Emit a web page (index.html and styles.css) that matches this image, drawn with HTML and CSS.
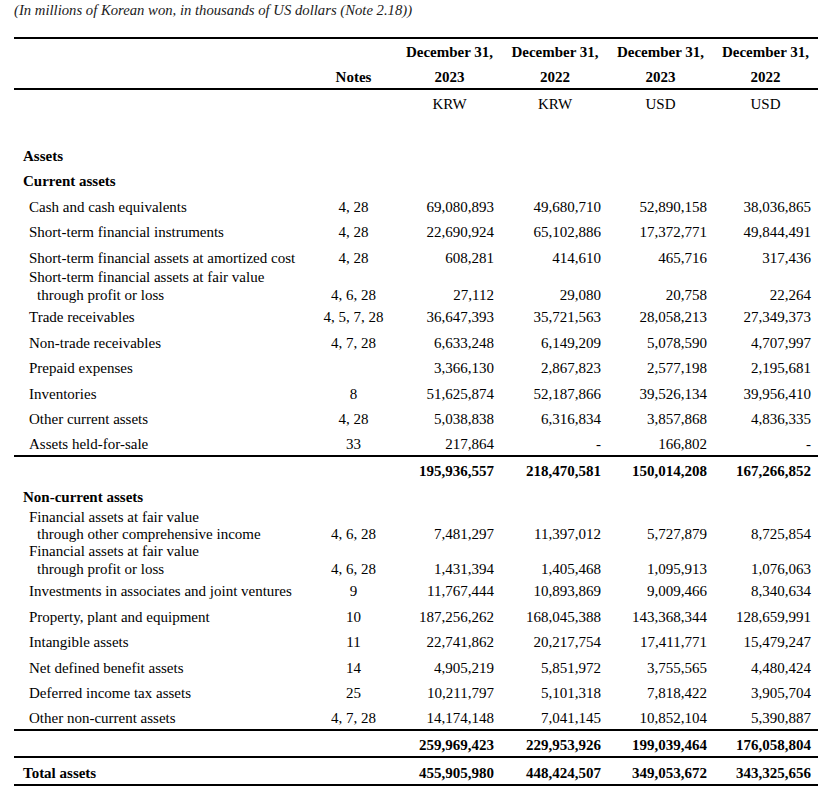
FILE: index.html
```html
<!DOCTYPE html>
<html>
<head>
<meta charset="utf-8">
<link rel="stylesheet" href="styles.css">
</head>
<body>
<div class="sheet">
  <div class="title">(In millions of Korean won, in thousands of US dollars (Note 2.18))</div>
  <div class="rule"></div>
  <div class="row head h1">
    <div></div><div></div>
    <div>December 31,</div><div>December 31,</div><div>December 31,</div><div>December 31,</div>
  </div>
  <div class="row head h2">
    <div></div><div class="notes">Notes</div>
    <div>2023</div><div>2022</div><div>2023</div><div>2022</div>
  </div>
  <div class="rule"></div>
  <div class="row cur">
    <div></div><div></div>
    <div>KRW</div><div>KRW</div><div>USD</div><div>USD</div>
  </div>
  <div class="spacer"></div>

  <div class="row"><div class="lbl l0 b">Assets</div></div>
  <div class="row"><div class="lbl l0 b">Current assets</div></div>
  <div class="row"><div class="lbl l1">Cash and cash equivalents</div><div class="nt">4, 28</div><div class="n">69,080,893</div><div class="n">49,680,710</div><div class="n">52,890,158</div><div class="n">38,036,865</div></div>
  <div class="row"><div class="lbl l1">Short-term financial instruments</div><div class="nt">4, 28</div><div class="n">22,690,924</div><div class="n">65,102,886</div><div class="n">17,372,771</div><div class="n">49,844,491</div></div>
  <div class="row"><div class="lbl l1">Short-term financial assets at amortized cost</div><div class="nt">4, 28</div><div class="n">608,281</div><div class="n">414,610</div><div class="n">465,716</div><div class="n">317,436</div></div>
  <div class="row two"><div class="lbl l1"><span>Short-term financial assets at fair value</span><span class="cont">through profit or loss</span></div><div class="nt">4, 6, 28</div><div class="n">27,112</div><div class="n">29,080</div><div class="n">20,758</div><div class="n">22,264</div></div>
  <div class="row"><div class="lbl l1">Trade receivables</div><div class="nt">4, 5, 7, 28</div><div class="n">36,647,393</div><div class="n">35,721,563</div><div class="n">28,058,213</div><div class="n">27,349,373</div></div>
  <div class="row"><div class="lbl l1">Non-trade receivables</div><div class="nt">4, 7, 28</div><div class="n">6,633,248</div><div class="n">6,149,209</div><div class="n">5,078,590</div><div class="n">4,707,997</div></div>
  <div class="row"><div class="lbl l1">Prepaid expenses</div><div class="nt"></div><div class="n">3,366,130</div><div class="n">2,867,823</div><div class="n">2,577,198</div><div class="n">2,195,681</div></div>
  <div class="row"><div class="lbl l1">Inventories</div><div class="nt">8</div><div class="n">51,625,874</div><div class="n">52,187,866</div><div class="n">39,526,134</div><div class="n">39,956,410</div></div>
  <div class="row"><div class="lbl l1">Other current assets</div><div class="nt">4, 28</div><div class="n">5,038,838</div><div class="n">6,316,834</div><div class="n">3,857,868</div><div class="n">4,836,335</div></div>
  <div class="row last"><div class="lbl l1">Assets held-for-sale</div><div class="nt">33</div><div class="n">217,864</div><div class="n">-</div><div class="n">166,802</div><div class="n">-</div></div>
  <div class="rule"></div>
  <div class="row sub1 b"><div></div><div></div><div class="n">195,936,557</div><div class="n">218,470,581</div><div class="n">150,014,208</div><div class="n">167,266,852</div></div>

  <div class="row"><div class="lbl l0 b">Non-current assets</div></div>
  <div class="row two"><div class="lbl l1"><span>Financial assets at fair value</span><span class="cont">through other comprehensive income</span></div><div class="nt">4, 6, 28</div><div class="n">7,481,297</div><div class="n">11,397,012</div><div class="n">5,727,879</div><div class="n">8,725,854</div></div>
  <div class="row two"><div class="lbl l1"><span>Financial assets at fair value</span><span class="cont">through profit or loss</span></div><div class="nt">4, 6, 28</div><div class="n">1,431,394</div><div class="n">1,405,468</div><div class="n">1,095,913</div><div class="n">1,076,063</div></div>
  <div class="row"><div class="lbl l1">Investments in associates and joint ventures</div><div class="nt">9</div><div class="n">11,767,444</div><div class="n">10,893,869</div><div class="n">9,009,466</div><div class="n">8,340,634</div></div>
  <div class="row"><div class="lbl l1">Property, plant and equipment</div><div class="nt">10</div><div class="n">187,256,262</div><div class="n">168,045,388</div><div class="n">143,368,344</div><div class="n">128,659,991</div></div>
  <div class="row"><div class="lbl l1">Intangible assets</div><div class="nt">11</div><div class="n">22,741,862</div><div class="n">20,217,754</div><div class="n">17,411,771</div><div class="n">15,479,247</div></div>
  <div class="row"><div class="lbl l1">Net defined benefit assets</div><div class="nt">14</div><div class="n">4,905,219</div><div class="n">5,851,972</div><div class="n">3,755,565</div><div class="n">4,480,424</div></div>
  <div class="row"><div class="lbl l1">Deferred income tax assets</div><div class="nt">25</div><div class="n">10,211,797</div><div class="n">5,101,318</div><div class="n">7,818,422</div><div class="n">3,905,704</div></div>
  <div class="row last"><div class="lbl l1">Other non-current assets</div><div class="nt">4, 7, 28</div><div class="n">14,174,148</div><div class="n">7,041,145</div><div class="n">10,852,104</div><div class="n">5,390,887</div></div>
  <div class="rule"></div>
  <div class="row sub2 b"><div></div><div></div><div class="n">259,969,423</div><div class="n">229,953,926</div><div class="n">199,039,464</div><div class="n">176,058,804</div></div>
  <div class="rule"></div>
  <div class="row total b"><div class="lbl l0">Total assets</div><div></div><div class="n">455,905,980</div><div class="n">448,424,507</div><div class="n">349,053,672</div><div class="n">343,325,656</div></div>
  <div class="rule"></div>
</div>
</body>
</html>
```

FILE: styles.css
```css
html, body {
  margin: 0;
  padding: 0;
  background: #ffffff;
}

body {
  font-family: "Liberation Serif", "Times New Roman", serif;
  font-size: 15px;
  color: #000;
}

.sheet {
  margin-left: 14px;
  width: 804px;
}

.title {
  font-style: italic;
  font-size: 14.7px;
  line-height: 20px;
  height: 37px;
  color: #1a1a1a;
  white-space: nowrap;
}

.rule {
  height: 2px;
  background: #000;
}

.row {
  display: grid;
  grid-template-columns: 296px 87px 105px 106px 105px 105px;
  height: 25.4px;
  align-items: center;
  line-height: 17.5px;
  white-space: nowrap;
}

.row > div {
  padding-top: 3px;
}

.row.two {
  height: 34.5px;
}

.row.two > .lbl {
  padding-top: 0;
}

.row.two > .n,
.row.two > .nt {
  align-self: end;
  padding-top: 0;
}

.row.last {
  height: 24.4px;
}

.head > div {
  text-align: center;
  font-weight: bold;
}

.head.h1 { height: 24px; }
.head.h2 { height: 25px; }
.head.h2 > div { padding-top: 4px; }
.row.cur { height: 26px; }
.row.cur > div { text-align: center; }

.spacer { height: 26.5px; }

.sub1 { height: 26.3px; }
.sub2 { height: 25px; }
.total { height: 26px; }
.total > div { padding-top: 4px; }

.b { font-weight: bold; }

.lbl {
  display: flex;
  flex-direction: column;
}

.l0 { padding-left: 9px; }
.l1 { padding-left: 15px; }
.cont { padding-left: 8px; }

.nt {
  text-align: center;
}

.n {
  text-align: right;
}

.row > .n:nth-child(3) { padding-right: 8px; }
.row > .n:nth-child(4) { padding-right: 7px; }
.row > .n:nth-child(5) { padding-right: 6px; }
.row > .n:nth-child(6) { padding-right: 7px; }
```
